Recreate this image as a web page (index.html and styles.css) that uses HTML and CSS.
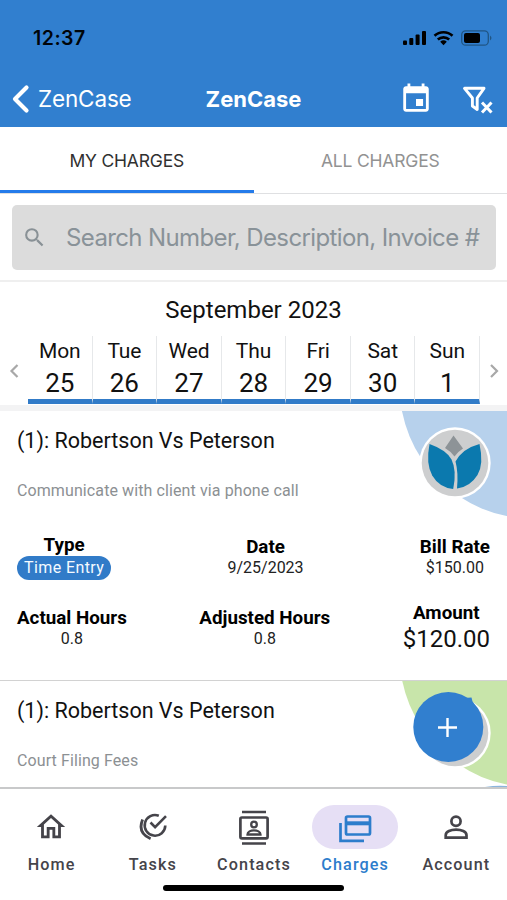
FILE: index.html
```html
<!DOCTYPE html>
<html lang="en">
<head>
<meta charset="utf-8">
<title>ZenCase</title>
<link rel="stylesheet" href="styles.css">
</head>
<body>
<div class="app">
  <header class="top">
    <div class="status">
      <span class="clock">12:37</span>
      <svg class="status-icons" width="92" height="20" viewBox="400 28 92 20">
        <rect x="403" y="40.5" width="4" height="4.5" rx="1"/><rect x="409.300" y="38" width="4" height="7" rx="1"/><rect x="415.600" y="34.500" width="4" height="10.500" rx="1"/><rect x="422" y="31" width="4" height="14" rx="1"/>
        <g fill="none" stroke="#000" stroke-width="2.700"><path d="M434.500 35.800a13.200 13.200 0 0 1 18 0"/><path d="M437.800 39.500a8.600 8.600 0 0 1 11.400 0"/></g>
        <path d="M440.200 41.700a5 5 0 0 1 6.600 0l-3.300 3.500z"/>
        <rect x="461.700" y="30.800" width="26.600" height="14.400" rx="4" fill="none" stroke="#205584" stroke-width="1.300"/><rect x="464" y="33" width="16" height="10" rx="2"/><path d="M490 35.500q3 2.500 0 5z" fill="#205584"/>
      </svg>
    </div>
    <div class="bar">
      <div class="back">
        <svg width="18" height="30" viewBox="0 0 18 30"><path d="M14.500 3.500 3 15l11.500 11.500" fill="none" stroke="#fff" stroke-width="4.200" stroke-linecap="round" stroke-linejoin="round"/></svg>
        <span>ZenCase</span>
      </div>
      <h1>ZenCase</h1>
      <div class="actions">
        <svg width="34" height="34" viewBox="0 0 24 24" fill="#fff"><path d="M17 12h-5v5h5v-5zM16 1v2H8V1H6v2H5c-1.110 0-1.990.9-1.990 2L3 19c0 1.100.89 2 2 2h14c1.100 0 2-.9 2-2V5c0-1.100-.9-2-2-2h-1V1h-2zm3 18H5V8h14v11z"/></svg>
        <svg width="34" height="32" viewBox="461 82 34 32" fill="none" stroke="#fff" stroke-width="2.900"><path d="M464.500 87.300h19.500l-6.800 9.700v11.500l-4.800-3.500v-8z" stroke-linejoin="round"/><path d="m482 101.500 9.500 10m0-10-9.500 10" stroke-width="3"/></svg>
      </div>
    </div>
  </header>
  <nav class="tabs"><div class="tab on">MY CHARGES</div><div class="tab">ALL CHARGES</div></nav>
  <div class="search-wrap">
    <div class="search">
      <svg width="25" height="25" viewBox="0 0 24 24" fill="#899196"><path d="M15.500 14h-.79l-.28-.27A6.470 6.470 0 0 0 16 9.500 6.500 6.500 0 1 0 9.500 16c1.610 0 3.090-.59 4.230-1.570l.27.28v.79l5 4.990L20.490 19l-4.990-5zm-6 0a4.500 4.500 0 1 1 0-9 4.500 4.500 0 0 1 0 9z"/></svg>
      <span>Search Number, Description, Invoice #</span>
    </div>
  </div>
  <section class="calendar">
    <h2>September 2023</h2>
    <div class="week">
      <svg class="arrow" width="28" height="68" viewBox="0 0 28 68"><path d="m17.500 29-6 6 6 6"/></svg>
      <div class="day"><span>Mon</span><b>25</b></div>
      <div class="day"><span>Tue</span><b>26</b></div>
      <div class="day"><span>Wed</span><b>27</b></div>
      <div class="day"><span>Thu</span><b>28</b></div>
      <div class="day"><span>Fri</span><b>29</b></div>
      <div class="day"><span>Sat</span><b>30</b></div>
      <div class="day"><span>Sun</span><b>1</b></div>
      <svg class="arrow" width="27" height="68" viewBox="0 0 27 68"><path d="m11 29 6 6-6 6"/></svg>
    </div>
  </section>
  <main>
    <article class="card first">
      <svg class="corner" width="106" height="107" viewBox="401 411 106 107">
        <circle cx="532.500" cy="385.500" r="133" fill="#b7d1ec"/>
        <circle cx="455" cy="463" r="35.700" fill="#fff"/><circle cx="455" cy="463" r="33.300" fill="#cdcecf"/>
        <path d="M453.500 435.500 463 448.500q-5 3-8.500 8-3.500-5-9.500-8.500z" fill="#8d9397"/>
        <path d="M429.500 444q17 6 22 15.500 5.500 11 1.700 29.500-14-1.500-21-13.500-6.500-12-2.700-31.500z" fill="#0b79ae"/>
        <path d="M479.500 444q4.500 20-2 31-7.500 12-20.500 13.500 1.500-16-1.500-27 7-13 24-17.500z" fill="#0b79ae"/>
      </svg>
      <h3>(1): Robertson Vs Peterson</h3>
      <p>Communicate with client via phone call</p>
      <div class="facts">
        <div class="fact type"><strong>Type</strong><span class="pill">Time Entry</span></div>
        <div class="fact"><strong>Date</strong><span>9/25/2023</span></div>
        <div class="fact"><strong>Bill Rate</strong><span>$150.00</span></div>
      </div>
      <div class="facts totals">
        <div class="fact"><strong>Actual Hours</strong><span>0.8</span></div>
        <div class="fact"><strong>Adjusted Hours</strong><span>0.8</span></div>
        <div class="fact amount"><strong>Amount</strong><span>$120.00</span></div>
      </div>
    </article>
    <article class="card second">
      <svg class="corner" width="106" height="107" viewBox="401 681 106 107">
        <circle cx="532.500" cy="654" r="133" fill="#c8e5aa"/>
        <path d="M485 787q12-2 22-1v2h-22z" fill="#8bb5dd"/>
        <circle cx="455" cy="733" r="35.700" fill="#fff"/><circle cx="455" cy="733" r="33.300" fill="#cdcecf"/>
        <circle cx="448.300" cy="727" r="35" fill="#317fcf"/><path d="m464 698 7.500-.5 1.500 6z" fill="#317fcf"/>
        <path d="M438 727.500h19m-9.500-9.500v19" stroke="#fff" stroke-width="2.400"/>
      </svg>
      <h3>(1): Robertson Vs Peterson</h3>
      <p>Court Filing Fees</p>
    </article>
  </main>
  <nav class="bottom">
    <div class="items">
      <div class="item"><i><svg width="34" height="34" viewBox="0 0 24 24"><path d="m12 5.690 5 4.500V18h-2v-6H9v6H7v-7.810l5-4.500M12 3 2 12h3v8h6v-6h2v6h6v-8h3L12 3z"/></svg></i><span>Home</span></div>
      <div class="item"><i><svg width="32" height="32" viewBox="136 811 32 32" fill="none" stroke="#45444a"><path d="M158.800 815.800a10.300 10.300 0 1 0 6.500 9.700" stroke-width="2.600"/><path d="m150.500 822.500 4.600 4.600L166 816.200" stroke-width="2.600"/><path d="M142.600 819.500q-5.500 13.500 8 19.300" stroke-width="2.800"/></svg></i><span>Tasks</span></div>
      <div class="item"><i><svg width="36" height="38" viewBox="236 808 36 38" fill="none" stroke="#45444a" stroke-width="2.700"><path d="M242 812h24m-24 31.500h24"/><rect x="240.400" y="817.500" width="27.200" height="20.800" rx="1.500"/><circle cx="254" cy="824.500" r="2.800" stroke-width="2.300"/><path d="M247.500 834.500c0-5.500 13-5.500 13 0z" stroke-width="2.300"/></svg></i><span>Contacts</span></div>
      <div class="item on"><i><svg width="36" height="32" viewBox="337 812 36 32" fill="none" stroke="#2d7dcc" stroke-width="2.700"><rect x="346" y="817.500" width="24" height="18" rx="1.500"/><path d="M346 824.300h24" stroke-width="4"/><path d="M340.500 824v17.800H364"/></svg></i><span>Charges</span></div>
      <div class="item"><i><svg width="34" height="34" viewBox="439 811 34 34" fill="none" stroke="#45444a" stroke-width="2.700"><circle cx="456" cy="822.200" r="4.600"/><path d="M445.700 838.700v-2.400c0-7.500 20.800-7.500 20.800 0v2.400z"/></svg></i><span>Account</span></div>
    </div>
    <div class="home-line"></div>
  </nav>
</div>
</body>
</html>
```
FILE: styles.css
```css
* { box-sizing: border-box; }
body { margin: 0; font-family: Roboto, "Liberation Sans", sans-serif; color: #111; background: #fff; }
h1, h2, h3, p { margin: 0; font-weight: 400; }
svg { display: block; flex: none; }
.app { width: 507px; height: 900px; display: flex; flex-direction: column; overflow: hidden; }
.app > * { flex: none; }
.top { height: 127px; background: #317fcf; font-family: Inter, sans-serif; }
.status { height: 70px; padding: 6px 15px 0 33px; display: flex; align-items: center; justify-content: space-between; }
.clock { font-size: 19.5px; font-weight: 600; letter-spacing: .5px; color: #00050a; }
.bar { height: 57px; padding: 0 12px; display: grid; grid-template-columns: 1fr 110px 1fr; align-items: center; color: #fff; }
.back { display: flex; align-items: center; gap: 8px; font-size: 22.5px; letter-spacing: -.15px; }
h1 { font-size: 22px; font-weight: 650; text-align: center; letter-spacing: 0; }
.actions { display: flex; justify-content: flex-end; align-items: center; gap: 28px; }
.tabs { height: 67px; display: flex; border-bottom: 1px solid #dfe0e2; }
.tab { flex: 1; display: flex; align-items: center; justify-content: center; padding-top: 4px; font: 17.5px Inter, sans-serif; letter-spacing: -.2px; color: #929292; border-bottom: 3px solid transparent; }
.tab.on { color: #303030; border-bottom-color: #247bea; }
.search-wrap { height: 88px; padding: 11px 11px 0 12px; border-bottom: 2px solid #efefef; }
.search { height: 65px; border-radius: 5px; background: #dcdcdc; display: flex; align-items: center; gap: 19px; padding-left: 10px; font: 24px Inter, sans-serif; letter-spacing: -.62px; color: #899298; white-space: nowrap; }
.calendar { height: 123px; display: flex; flex-direction: column; }
h2 { height: 54px; line-height: 56px; font-size: 24px; text-align: center; color: #111; }
.week { display: flex; height: 68px; }
.arrow { fill: none; stroke: #a8a8a8; stroke-width: 2.2; }
.day { flex: 1; display: flex; flex-direction: column; align-items: center; border-bottom: 5px solid #317bc8; border-right: 1px solid #e6e8ea; padding-top: 1px; }
.day span { font-size: 21px; line-height: 28px; letter-spacing: -.1px; }
.day b { font-size: 26px; line-height: 37px; font-weight: 400; }
main { padding-top: 1px; background: #f3f3f4; }
.card { position: relative; padding: 0 17px; border-bottom: 1px solid #d2d2d2; background: #fff; }
.first { height: 275px; border-top: 5px solid #f3f3f4; }
.second { height: 106px; border-bottom: 0; overflow: hidden; }
.corner { position: absolute; top: 0; right: 0; }
h3 { padding-top: 16px; line-height: 28px; font-size: 21.5px; }
.card p { padding-top: 24px; line-height: 24px; font-size: 16px; color: #8c9093; letter-spacing: .1px; }
.facts { margin-top: 32px; display: flex; justify-content: space-between; height: 50px; }
.fact { display: flex; flex-direction: column; align-items: center; font-size: 16px; line-height: 20px; color: #222; }
.fact strong { font-size: 18.8px; line-height: 22px; font-weight: 700; color: #000; }
.fact:not(.type):not(.amount) { padding-top: 1px; }
.type { margin-top: -1px; }
.pill { height: 24px; line-height: 24px; padding: 0 7px; border-radius: 12px; letter-spacing: .4px; background: #317bc8; color: #f5faff; }
.totals { margin-top: 21px; }
.amount { margin-top: -4px; }
.amount span { font-size: 24px; line-height: 30px; color: #111; }
.bottom { height: 113px; border-top: 2px solid #c8c9ca; background: #fff; }
.items { display: grid; grid-template-columns: repeat(5, 101.2px); justify-content: center; padding-top: 16px; }
.item { display: flex; flex-direction: column; align-items: center; font: 500 16.2px Roboto, sans-serif; letter-spacing: 1.1px; color: #45444a; }
.item i { display: grid; place-items: center; width: 86px; height: 44px; border-radius: 22px; }
.item svg { fill: #45444a; }
.item svg[fill="none"] { fill: none; }
.item span { margin-top: 6px; line-height: 20px; padding-left: 1px; }
.item.on { color: #2d7dcc; }
.item.on i { background: #e6dff5; }
.home-line { width: 181px; height: 6px; border-radius: 3px; background: #000; margin: 10px auto 0; }
```
